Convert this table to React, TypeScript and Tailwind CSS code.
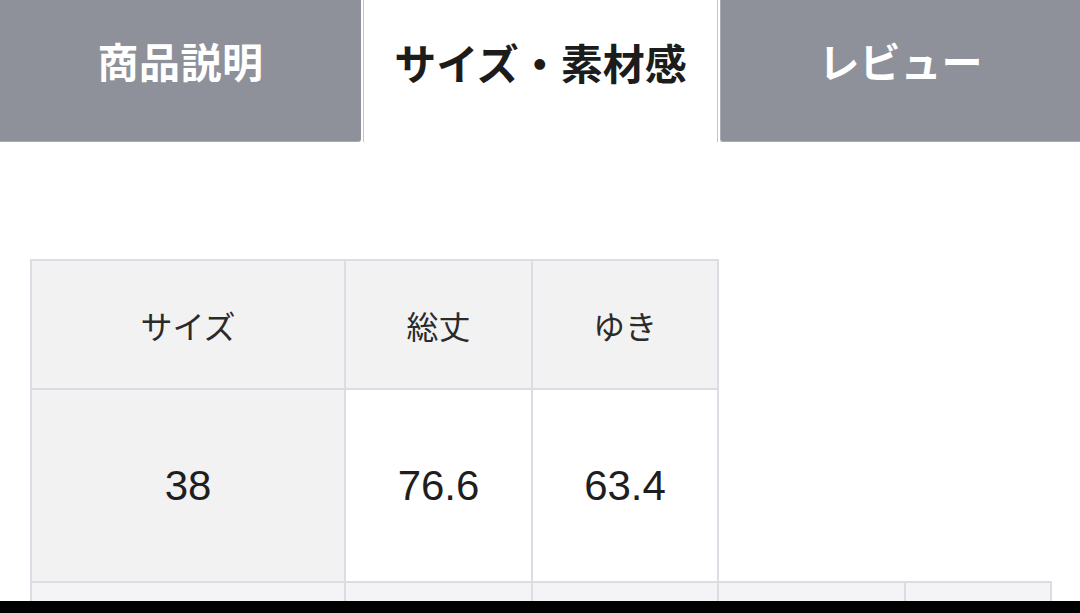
import React from 'react'

const jp = { fontFamily: '"Noto Sans CJK JP", "Noto Sans", sans-serif' }
const num = { fontFamily: '"Liberation Sans", Arial, sans-serif' }

const headers = ['サイズ', '総丈', 'ゆき']
const values = ['38', '76.6', '63.4']

export default function App() {
  return (
    <div className="w-[1080px] h-[613px] bg-white flex flex-col overflow-hidden">
      {/* Tabs */}
      <div className="flex h-[142px] shrink-0" style={jp}>
        <div className="w-[361px] bg-[#8e9199] border-b border-[#a9abb0] rounded-br-[3px] flex items-center justify-center">
          <span className="text-[41px] font-bold text-white tracking-[0.5px] pb-[20px]">商品説明</span>
        </div>
        <div className="w-[2px]" />
        <div className="w-[355px] bg-white border-x border-[#c4c5c9] flex items-center justify-center">
          <span className="text-[42px] font-bold text-[#1c1c1c] pb-[20px]">サイズ・素材感</span>
        </div>
        <div className="w-[2px]" />
        <div className="flex-1 bg-[#8e9199] border-b border-l border-[#a9abb0] rounded-bl-[3px] flex items-center justify-center">
          <span className="text-[41px] font-bold text-white pb-[20px]">レビュー</span>
        </div>
      </div>

      {/* Size table */}
      <div className="flex-1 overflow-hidden pt-[117px] pl-[30px]">
        <table className="border-collapse table-fixed">
          <colgroup>
            <col className="w-[314px]" />
            <col className="w-[187px]" />
            <col className="w-[186px]" />
            <col className="w-[187px]" />
            <col className="w-[146px]" />
          </colgroup>
          <tbody>
            <tr className="h-[129px]">
              {headers.map(h => (
                <th
                  key={h}
                  className="border-2 border-[#dcdde4] bg-[#f2f2f2] text-[32px] font-normal text-[#2a2a2a] text-center"
                  style={jp}
                >
                  {h}
                </th>
              ))}
            </tr>
            <tr className="h-[193px]">
              {values.map((v, i) => (
                <td
                  key={v}
                  className={`border-2 border-[#dcdde4] text-[42px] text-[#1e1e1e] text-center ${i === 0 ? 'bg-[#f2f2f2]' : 'bg-white'}`}
                  style={num}
                >
                  {v}
                </td>
              ))}
            </tr>
            <tr className="h-[40px]">
              {[0, 1, 2, 3, 4].map(i => (
                <td key={i} className="border-2 border-[#dcdde4] bg-[#f4f4f6]" />
              ))}
            </tr>
          </tbody>
        </table>
      </div>

      {/* bottom bar */}
      <div className="h-[12px] bg-black shrink-0" />
    </div>
  )
}
